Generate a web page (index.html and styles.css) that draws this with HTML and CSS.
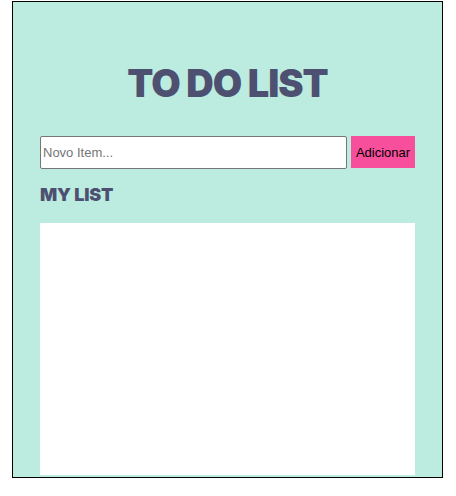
FILE: index.html
```html
<!DOCTYPE html>
<html lang="pt">
<head>
<meta charset="utf-8">
<title>To Do List</title>
<link rel="stylesheet" href="styles.css">
</head>
<body>
<main class="app">
  <h1 class="title">TO DO LIST</h1>
  <form class="add-form">
    <input class="add-input" type="text" placeholder="Novo Item...">
    <button class="add-btn" type="button">Adicionar</button>
  </form>
  <h2 class="subtitle">MY LIST</h2>
  <ul class="list"></ul>
</main>
</body>
</html>
```

FILE: styles.css
```css
* { box-sizing: border-box; }
html, body { margin: 0; padding: 0; background: #fff; }
.app {
  margin: 1px 13px 0 12px;
  width: 431px;
  height: 477px;
  border: 1px solid #000;
  background: #bcebdf;
  padding: 0 27px 2px;
  display: flex;
  flex-direction: column;
}
.title {
  margin: 59px 0 0;
  font-family: Inter, "Noto Sans", sans-serif;
  font-weight: 900;
  font-size: 38px;
  line-height: 44px;
  letter-spacing: -1px;
  color: #4d5070;
  text-align: center;
}
.add-form {
  margin-top: 31px;
  display: flex;
  gap: 4px;
}
.add-input {
  width: 307px;
  height: 33px;
  border: 1px solid #767676;
  border-radius: 2px;
  padding: 0 2px;
  font-family: "Liberation Sans", Arial, sans-serif;
  font-size: 13px;
  background: #fff;
}
.add-input::placeholder { color: #757575; }
.add-btn {
  width: 64px;
  height: 32px;
  border: none;
  background: #f74f9c;
  color: #000;
  font-family: "Liberation Sans", Arial, sans-serif;
  font-size: 13px;
  padding: 0;
}
.subtitle {
  margin: 14px 0 0;
  font-family: Inter, "Noto Sans", sans-serif;
  font-weight: 900;
  font-size: 18px;
  line-height: 24px;
  letter-spacing: -0.2px;
  color: #4d5070;
}
.list {
  margin: 16px 0 0;
  padding: 0;
  list-style: none;
  background: #fff;
  flex: 1;
}
```
